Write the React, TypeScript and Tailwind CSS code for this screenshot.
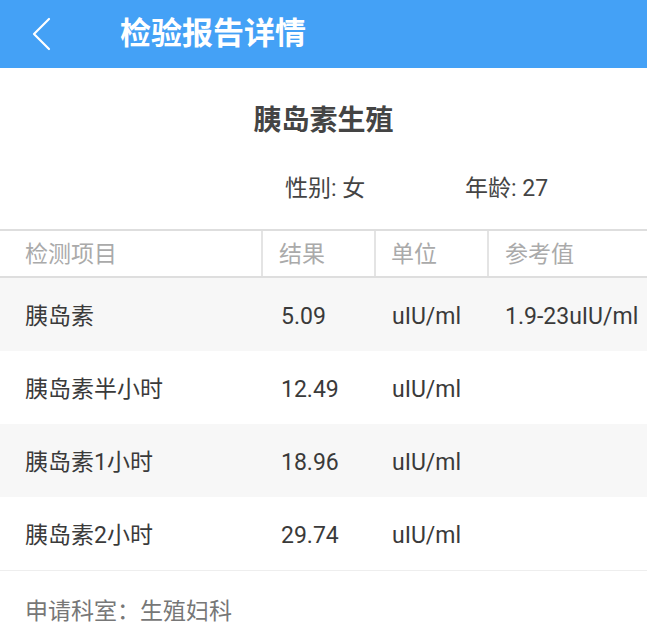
import React from 'react';

const rows = [
    { name: '胰岛素', result: '5.09', unit: 'uIU/ml', ref: '1.9-23uIU/ml' },
    { name: '胰岛素半小时', result: '12.49', unit: 'uIU/ml', ref: '' },
    { name: '胰岛素1小时', result: '18.96', unit: 'uIU/ml', ref: '' },
    { name: '胰岛素2小时', result: '29.74', unit: 'uIU/ml', ref: '' },
];

export default function App() {
    return (
        <div
            className="w-[647px] h-[640px] bg-white overflow-hidden"
            style={{ fontFamily: '"Roboto", "Noto Sans CJK SC", sans-serif' }}
        >
            {/* Top bar */}
            <div className="h-[68px] bg-[#44a1f6] flex items-center">
                <div className="w-[120px] pl-[30px] flex items-center">
                    <svg width="22" height="34" viewBox="0 0 22 34" fill="none">
                        <path d="M19 2 L4 17 L19 32" stroke="white" strokeWidth="2.2" strokeLinecap="round" strokeLinejoin="round" />
                    </svg>
                </div>
                <h1 className="text-[31px] font-bold text-white">检验报告详情</h1>
            </div>

            {/* Report title */}
            <div className="pt-[36px] text-center text-[28px] font-bold text-[#444] leading-[34px]">胰岛素生殖</div>

            <div className="flex pt-[37px] h-[91px] text-[23px] text-[#444] leading-[28px]">
                <div className="w-[285px]" />
                <div className="w-[180px]">性别: 女</div>
                <div>年龄: 27</div>
            </div>

            {/* Table */}
            <div className="border-t-2 border-[#dedede]">
                <div className="flex h-[47px] items-center text-[23px] text-[#aaa] border-b-2 border-[#dedede]">
                    <div className="w-[263px] h-full flex items-center pt-[3px] pl-[25px] border-r-2 border-[#e4e4e4]">检测项目</div>
                    <div className="w-[113px] h-full flex items-center pt-[3px] pl-[16px] border-r-2 border-[#e4e4e4]">结果</div>
                    <div className="w-[113px] h-full flex items-center pt-[3px] pl-[15px] border-r-2 border-[#e4e4e4]">单位</div>
                    <div className="flex-1 h-full flex items-center pt-[3px] pl-[16px]">参考值</div>
                </div>
                {rows.map((r, i) => (
                    <div
                        key={r.name}
                        className={`flex h-[73px] items-center pt-[5px] text-[23px] text-[#3a3a3a] ${i % 2 === 0 ? 'bg-[#f7f7f7]' : 'bg-white'}`}
                    >
                        <div className="w-[263px] pl-[25px]">{r.name}</div>
                        <div className="w-[113px] pl-[18px]">{r.result}</div>
                        <div className="w-[113px] pl-[16px]">{r.unit}</div>
                        <div className="flex-1 pl-[16px] whitespace-nowrap">{r.ref}</div>
                    </div>
                ))}
            </div>

            <div className="border-t border-[#eee] pt-[24px] pl-[25px] text-[23px] text-[#777]">申请科室：生殖妇科</div>
        </div>
    );
}
